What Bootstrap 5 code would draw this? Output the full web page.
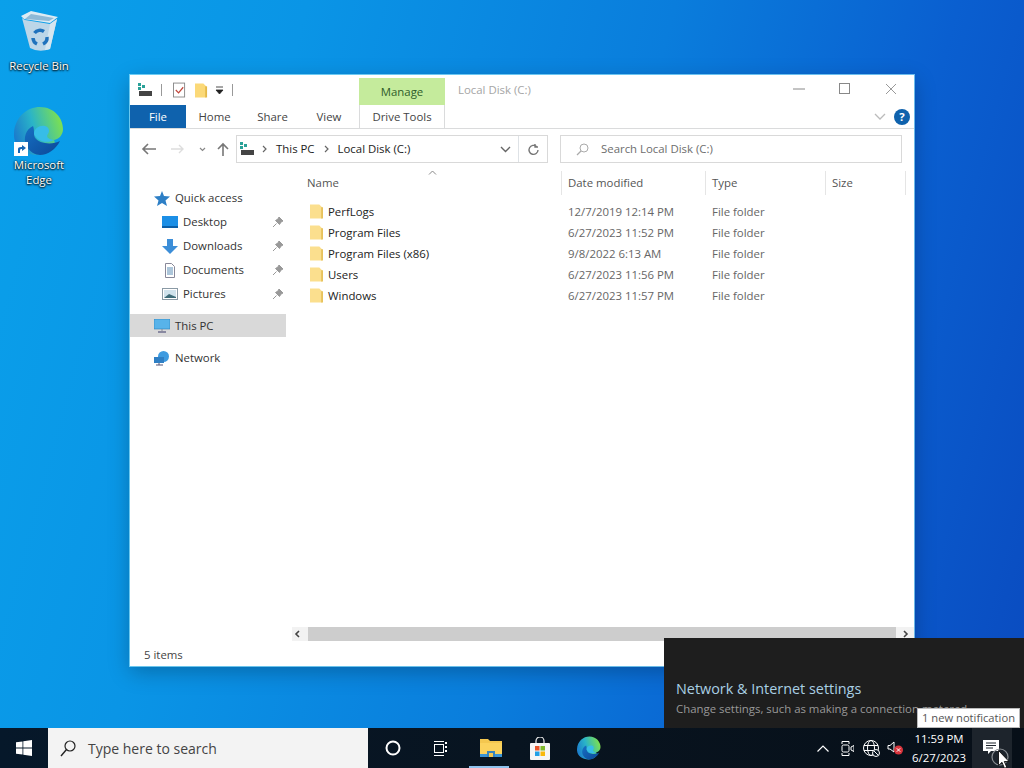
<!DOCTYPE html>
<html>
<head>
    <title>Local Disk (C:)</title>
    <link href="https://cdn.jsdelivr.net/npm/bootstrap@5.3.2/dist/css/bootstrap.min.css" rel="stylesheet"/>
    <style>
    html, body { height: 100%; overflow: hidden; }
    body { font-family: "Open Sans", "Noto Sans", sans-serif; font-size: 11.4px; color: #333; background: #0a86de; }
    .desk { position: relative; width: 1024px; height: 768px; overflow: hidden;
        background: linear-gradient(105deg, #0aa0ea 0%, #0a95e6 25%, #0a7ddc 55%, #0a5fd0 78%, #0a4abf 100%); }
    .desk-ico { position: absolute; width: 76px; color: #fff; text-align: center; line-height: 15px; text-shadow: 0 1px 2px #000, 0 0 2px #000; }
    .ico-bin { left: 1px; top: 11px; }
    .ico-edge { left: 1px; top: 106px; }
    .bin-svg { margin-bottom: 7px; }
    .edge-wrap { position: relative; width: 50px; height: 50px; margin: 0 auto 1px; }
    .edge-short { position: absolute; left: 0; bottom: 0; }

    .win { position: absolute; left: 130px; top: 75px; width: 784px; height: 591px; background: #fff; box-shadow: 0 0 0 1px rgba(150,230,255,.7), 0 6px 20px rgba(0,0,0,.25); }
    .title-row { height: 30px; }
    .qat { padding-left: 8px; width: 229px; }
    .qat-sep { width: 1px; height: 12px; background: #999; }
    .mx-8 { margin-left: 8px; margin-right: 8px; }
    .ml-3px { margin-left: 3px; }
    .ml-7 { margin-left: 7px; }
    .ml-9 { margin-left: 9px; }
    .ml-10 { margin-left: 10px; }
    .ml-11 { margin-left: 11px; }
    .ml-14 { margin-left: 14px; }
    .ml-15 { margin-left: 15px; }
    .ml-12 { margin-left: 12px; }
    .manage-tab { width: 86px; height: 27px; margin-top: 3px; background: #c5eb9c; color: #2f5d2a; text-align: center; line-height: 28px; }
    .title-text { color: #a5a5a5; margin-left: 13px; padding-top: 6px; }
    .win-btns { margin-left: auto; }
    .win-btn { width: 46px; height: 28px; display: flex; align-items: center; justify-content: center; }
    .tabs-row { height: 24px; border-bottom: 1px solid #dadbdc; }
    .tab-file { width: 56px; height: 23px; background: #0f62ad; color: #fff; text-align: center; line-height: 23px; }
    .tab-item { color: #444; line-height: 24px; text-align: center; }
    .tab-home { width: 57px; }
    .tab-share { width: 59px; }
    .tab-view { width: 54px; }
    .tab-drive { width: 86px; height: 23px; margin-left: 3px; border-left: 1px solid #dadbdc; border-right: 1px solid #dadbdc; }
    .help-ico { width: 16px; height: 16px; line-height: 16px; background: #0f62ad; }
    .addr-row { height: 44px; padding-top: 6px; }
    .addr-nav { width: 106px; height: 28px; }
    .addr-box { width: 312px; height: 28px; border: 1px solid #d9d9d9; color: #222; }
    .refresh-btn { width: 29px; margin-left: 7px; }
    .search-box { width: 342px; height: 28px; border: 1px solid #d9d9d9; margin-left: 12px; color: #6d6d6d; }
    .nav-pane { width: 156px; flex: none; padding-top: 13px; }
    .nav-line { height: 24px; color: #333; }
    .nav-top { padding-left: 24px; gap: 5px; }
    .nav-sub { padding-left: 32px; gap: 5px; }
    .nav-sub svg { flex: none; }
    .pin { margin-left: auto; margin-right: 3px; }
    .nav-sel { background: #d9d9d9; height: 23px; margin-top: 8px; }
    .nav-net { margin-top: 9px; }
    .list-pane { flex: 1; min-width: 0; position: relative; padding-left: 6px; }
    .cols { display: grid; grid-template-columns: 263px 144px 120px 80px; padding-left: 7px; }
    .head-row { height: 24px; line-height: 24px; color: #555; margin-top: -2px; }
    .head-cell { padding-left: 6px; border-right: 1px solid #e5e5e5; height: 24px; }
    .head-name { padding-left: 8px; position: relative; }
    .sort-up { position: absolute; left: 129px; top: -1px; }
    .file-row { height: 21px; line-height: 21px; color: #666; }
    .file-row > div { padding-left: 6px; }
    .file-name { display: flex; align-items: center; gap: 5px; color: #222; }
    .file-row > .file-name { padding-left: 11px; }
    .files { margin-top: 6px; }
    .hscroll { position: absolute; left: 6px; right: 0; bottom: 25px; height: 14px; background: #f2f2f2; }
    .hthumb { position: absolute; left: 16px; right: 18px; top: 0; bottom: 0; background: #cdcdcd; }
    .harrow-l { position: absolute; left: 2px; top: 3px; }
    .harrow-r { position: absolute; right: 5px; top: 3px; }
    .status-row { position: absolute; left: 14px; bottom: 3px; color: #444; }

    .flyout { position: absolute; left: 664px; top: 638px; width: 360px; height: 90px; background: #1e1e1e; padding: 42px 0 0 12px; }
    .fly-title { font-size: 14.4px; color: #a9cfe4; line-height: 18px; }
    .fly-sub { color: #999; line-height: 20px; margin-top: 1px; white-space: nowrap; }
    .tip-note { position: absolute; left: 917px; top: 708px; width: 103px; height: 20px; background: #fff; border: 1px solid #bbb; color: #555; font-size: 11.2px; line-height: 18px; text-align: center; white-space: nowrap; }

    .taskbar { position: absolute; left: 0; right: 0; bottom: 0; height: 40px; background: linear-gradient(90deg, #06182a, #081420 50%, #070f18); color: #fff; }
    .start-btn { width: 48px; }
    .search-bar { width: 320px; height: 40px; background: #f3f3f3; color: #444; font-size: 14px; gap: 12px; padding-left: 12px; }
    .tb-ico { width: 49px; height: 40px; flex: none; position: relative; }
    .tb-active::after { content: ""; position: absolute; left: 3px; right: 6px; bottom: 0; height: 2px; background: #8fc3ee; }
    .tray { margin-left: auto; }
    .tray-up { margin-right: 12px; }
    .tray-meet { margin-right: 9px; }
    .tray-globe { margin-right: 7px; }
    .tray-sound { margin-right: 3px; }
    .clock { width: 66px; padding-top: 1px; text-align: center; line-height: 18.500px; color: #fff; }
    .notif { width: 40px; height: 40px; background: #1d242c; margin-right: 12px; }
    .notif-svg { margin: -2px 0 0 -2px; }
    .busy-ring { position: absolute; left: 991px; top: 748px; }
    .cursor-arrow { position: absolute; left: 998px; top: 750px; }
    </style>
</head>
<body>
<svg width="0" height="0" class="position-absolute">
    <defs>
        <linearGradient id="eg1" x1="0" y1=".7" x2="1" y2=".4"><stop offset="0" stop-color="#1a78cc"/><stop offset=".45" stop-color="#2ab4c8"/><stop offset="1" stop-color="#7de050"/></linearGradient>
        <linearGradient id="eg2" x1="0" y1="0" x2="1" y2="1"><stop offset="0" stop-color="#1670c4"/><stop offset="1" stop-color="#0c4796"/></linearGradient>
        <symbol id="edge-logo" viewBox="0 0 50 50">
            <path d="M0 27 C1 11 13 1 26 1 C40 1 49 12 49 23 C49 29 45 33 40 34 C44 42 34 49 24 49 C10 49 -1 40 0 27 Z" fill="url(#eg1)"/>
            <path d="M19 20 C12 23 9 32 12 39 C15 46 22 49 26 49 C34 49 42 43 46 35 C42 37 36 38 31 37 C25 36 20 33 20 28 C20 25 20 22 19 20 Z" fill="url(#eg2)"/>
            <path d="M20 28 C20 22 26 19 31 20 C35 21 36 25 34 28 C32 30 33 33 40 34 C35 37 24 37 20 28 Z" fill="#37bde8"/>
        </symbol>
        <symbol id="pin-ico" viewBox="0 0 10 10">
            <path d="M6 0l4 4-2 1-1.500 2.500L2.500 3.500 5 2zM3.500 6.500L0 10" fill="#999" stroke="#999"/>
        </symbol>
        <symbol id="folder-ico" viewBox="0 0 14 17">
            <path d="M0 1h10l3 3v12H0z" fill="#fbdf8e"/><path d="M13 4v12" stroke="#e7c25c" stroke-width="2"/>
        </symbol>
        <symbol id="drive-ico" viewBox="0 0 15 14">
            <path d="M0 0h3v3H0zM4 2h3v3H4zM0 4h3v3H0z" fill="#2aa198"/><rect x="1" y="8" width="13" height="5" fill="#444"/>
        </symbol>
    </defs>
</svg>
<div class="desk">

    <div class="desk-ico ico-bin">
        <svg width="37" height="40" viewBox="0 0 37 40" class="d-block mx-auto bin-svg">
            <path d="M0 5 L10 0 L37 6 L29 12 L3 8 Z" fill="#dcebf4"/>
            <path d="M4 8 L10 3 L33 7 L28 10 Z" fill="#8fb9d6"/>
            <path d="M1 7 L4 9 L29 13 L36 8 L29 38 Q18 42 9 37 Z" fill="#bcd6e8"/>
            <path d="M29 13 L36 8 L29 38 Q26 39 24 39 Z" fill="#d5e6f0"/>
            <path d="M13.500 22 A7 7 0 0 1 23 20.500 M26 26 A7 7 0 0 1 22 33 M16 33 A7 7 0 0 1 12 27" fill="none" stroke="#1f72bd" stroke-width="3.500"/>
        </svg>
        <div>Recycle Bin</div>
    </div>

    <div class="desk-ico ico-edge">
        <div class="edge-wrap">
            <svg width="50" height="50"><use href="#edge-logo"/></svg>
            <svg class="edge-short" width="14" height="14" viewBox="0 0 14 14">
                <rect width="14" height="14" fill="#fff"/>
                <path d="M4 11 V7 Q4 5 7 5 H8 V3 L12 6 L8 9 V7 H7 Q6 7 6 9 V11 Z" fill="#1666b5"/>
            </svg>
        </div>
        <div>Microsoft<br/>Edge</div>
    </div>

    <div class="win d-flex flex-column">
        <div class="d-flex title-row">
            <div class="d-flex align-items-center qat">
                <svg width="15" height="14"><use href="#drive-ico"/></svg>
                <div class="qat-sep mx-8"></div>
                <svg class="ml-3px" width="13" height="17" viewBox="0 0 14 17"><rect x=".5" y=".5" width="12" height="15" fill="#fff" stroke="#888"/><path d="M3 8l3 3 5-6" fill="none" stroke="#c0453a" stroke-width="1.3"/></svg>
                <svg class="ml-9" width="13" height="17" viewBox="0 0 14 17"><path d="M0 1h9l3 3v12H0z" fill="#fbd978"/><path d="M12 4v12" stroke="#e4b948" stroke-width="2"/></svg>
                <svg class="ml-7" width="9" height="9" viewBox="0 0 9 9"><path d="M1 1h7M1 4h7L4.500 8z" fill="#222" stroke="#222" stroke-width=".8"/></svg>
                <div class="qat-sep mx-8"></div>
            </div>
            <div class="manage-tab">Manage</div>
            <div class="title-text">Local Disk (C:)</div>
            <div class="d-flex win-btns">
                <div class="win-btn"><svg width="12" height="2"><path d="M0 1h12" stroke="#888"/></svg></div>
                <div class="win-btn"><svg width="12" height="12"><rect x=".5" y=".5" width="10" height="10" fill="none" stroke="#888"/></svg></div>
                <div class="win-btn"><svg width="12" height="12"><path d="M1 1l10 10M11 1L1 11" stroke="#999"/></svg></div>
            </div>
        </div>
        <div class="d-flex tabs-row">
            <div class="tab-file">File</div>
            <div class="tab-item tab-home">Home</div>
            <div class="tab-item tab-share">Share</div>
            <div class="tab-item tab-view">View</div>
            <div class="tab-item tab-drive">Drive Tools</div>
            <div class="ms-auto d-flex align-items-center">
                <svg width="12" height="8" viewBox="0 0 12 8" class="me-2"><path d="M1 1l5 5 5-5" fill="none" stroke="#bbb" stroke-width="1.3"/></svg>
                <div class="rounded-circle text-white text-center fw-bold me-1 help-ico">?</div>
            </div>
        </div>
        <div class="d-flex addr-row">
            <div class="d-flex align-items-center addr-nav">
                <svg class="ml-11" width="16" height="14" viewBox="0 0 16 14"><path d="M15 7H2M7 2L2 7l5 5" fill="none" stroke="#777" stroke-width="1.6"/></svg>
                <svg class="ml-14" width="14" height="12" viewBox="0 0 14 12"><path d="M0 6h12M8 2l4 4-4 4" fill="none" stroke="#ddd" stroke-width="1.4"/></svg>
                <svg class="ml-14" width="7" height="5" viewBox="0 0 7 5"><path d="M1 1l2.500 2.500L6 1" fill="none" stroke="#888" stroke-width="1.2"/></svg>
                <svg class="ml-10" width="14" height="14" viewBox="0 0 14 14"><path d="M7 14V2M2 7l5-5 5 5" fill="none" stroke="#777" stroke-width="1.6"/></svg>
            </div>
            <div class="d-flex align-items-center addr-box">
                <svg class="ml-3px" width="15" height="14"><use href="#drive-ico"/></svg>
                <svg class="ml-7" width="5" height="8" viewBox="0 0 5 8"><path d="M1 1l3 3-3 3" fill="none" stroke="#666" stroke-width="1.2"/></svg>
                <span class="ml-9">This PC</span>
                <svg class="ml-9" width="5" height="8" viewBox="0 0 5 8"><path d="M1 1l3 3-3 3" fill="none" stroke="#666" stroke-width="1.2"/></svg>
                <span class="ml-9">Local Disk (C:)</span>
                <svg width="11" height="7" viewBox="0 0 11 7" class="ms-auto"><path d="M1 1l4.500 4.500L10 1" fill="none" stroke="#666" stroke-width="1.4"/></svg>
                <div class="border-start d-flex align-items-center justify-content-center h-100 refresh-btn">
                    <svg width="12" height="13" viewBox="0 0 12 13"><path d="M9.500 3.500A4.500 4.500 0 1 0 11 7M8 1v3h3" fill="none" stroke="#777" stroke-width="1.4"/></svg>
                </div>
            </div>
            <div class="d-flex align-items-center search-box">
                <svg class="ml-15" width="13" height="13" viewBox="0 0 13 13"><circle cx="8" cy="5" r="4" fill="none" stroke="#aaa"/><path d="M5 8l-4 4" stroke="#aaa" stroke-width="1.2"/></svg>
                <span class="ml-12">Search Local Disk (C:)</span>
            </div>
        </div>
        <div class="d-flex flex-grow-1">
            <div class="nav-pane">
                <div class="d-flex align-items-center nav-line nav-top">
                    <svg width="16" height="15" viewBox="0 0 16 15"><path d="M8 0l2 5 6 .5-4.500 4 1.500 5.500L8 12l-5 3 1.500-5.500L0 5.500 6 5z" fill="#2d7fc6"/></svg>
                    <span>Quick access</span>
                </div>
                <div class="d-flex align-items-center nav-line nav-sub">
                    <svg width="16" height="12" viewBox="0 0 16 12"><rect width="16" height="12" fill="#1c8fe6"/><rect y="10" width="16" height="2" fill="#0b5fa8"/></svg>
                    <span>Desktop</span>
                    <svg class="pin" width="10" height="10"><use href="#pin-ico"/></svg>
                </div>
                <div class="d-flex align-items-center nav-line nav-sub">
                    <svg width="16" height="15" viewBox="0 0 16 15"><path d="M5 0h6v7h5l-8 8-8-8h5z" fill="#3c8ed8"/></svg>
                    <span>Downloads</span>
                    <svg class="pin" width="10" height="10"><use href="#pin-ico"/></svg>
                </div>
                <div class="d-flex align-items-center nav-line nav-sub">
                    <svg width="16" height="15" viewBox="0 0 16 15"><path d="M3.500.500h6l3 3v11h-9z" fill="#fff" stroke="#889"/><path d="M5 5h6M5 7h6M5 9h6M5 11h6" stroke="#5b8db5"/></svg>
                    <span>Documents</span>
                    <svg class="pin" width="10" height="10"><use href="#pin-ico"/></svg>
                </div>
                <div class="d-flex align-items-center nav-line nav-sub">
                    <svg width="16" height="12" viewBox="0 0 16 12"><rect x=".5" y=".5" width="15" height="11" fill="#fff" stroke="#8a9aa5"/><rect x="2" y="2" width="12" height="8" fill="#cfe2ec"/><path d="M2 10l5-4 7 3v1z" fill="#3d6b78"/></svg>
                    <span>Pictures</span>
                    <svg class="pin" width="10" height="10"><use href="#pin-ico"/></svg>
                </div>
                <div class="d-flex align-items-center nav-line nav-top nav-sel">
                    <svg width="16" height="14" viewBox="0 0 16 14"><rect width="16" height="10" fill="#58b3ea" stroke="#2b7fb8" stroke-width=".6"/><path d="M4 13h8" stroke="#668" stroke-width="1.4"/><path d="M8 10v3" stroke="#889"/></svg>
                    <span>This PC</span>
                </div>
                <div class="d-flex align-items-center nav-line nav-top nav-net">
                    <svg width="16" height="15" viewBox="0 0 16 15"><circle cx="9.500" cy="5.500" r="5.500" fill="#3e9be0"/><rect x="0" y="6" width="10" height="6" fill="#2f7fc4"/><path d="M2 14h7M5 12v2" stroke="#557"/></svg>
                    <span>Network</span>
                </div>
            </div>
            <div class="list-pane">
                <div class="cols head-row">
                    <div class="head-cell head-name">Name
                        <svg class="sort-up" width="9" height="5" viewBox="0 0 9 5"><path d="M1 4.500l3.500-3.500L8 4.500" fill="none" stroke="#888"/></svg>
                    </div>
                    <div class="head-cell">Date modified</div>
                    <div class="head-cell">Type</div>
                    <div class="head-cell">Size</div>
                </div>
                <div class="files">
                    <div class="cols file-row"><div class="file-name"><svg width="13" height="17"><use href="#folder-ico"/></svg>PerfLogs</div><div>12/7/2019 12:14 PM</div><div>File folder</div><div></div></div>
                    <div class="cols file-row"><div class="file-name"><svg width="13" height="17"><use href="#folder-ico"/></svg>Program Files</div><div>6/27/2023 11:52 PM</div><div>File folder</div><div></div></div>
                    <div class="cols file-row"><div class="file-name"><svg width="13" height="17"><use href="#folder-ico"/></svg>Program Files (x86)</div><div>9/8/2022 6:13 AM</div><div>File folder</div><div></div></div>
                    <div class="cols file-row"><div class="file-name"><svg width="13" height="17"><use href="#folder-ico"/></svg>Users</div><div>6/27/2023 11:56 PM</div><div>File folder</div><div></div></div>
                    <div class="cols file-row"><div class="file-name"><svg width="13" height="17"><use href="#folder-ico"/></svg>Windows</div><div>6/27/2023 11:57 PM</div><div>File folder</div><div></div></div>
                </div>
                <div class="hscroll">
                    <svg class="harrow-l" width="6" height="8" viewBox="0 0 6 8"><path d="M5 1L2 4l3 3" fill="none" stroke="#444" stroke-width="1.6"/></svg>
                    <div class="hthumb"></div>
                    <svg class="harrow-r" width="6" height="8" viewBox="0 0 6 8"><path d="M1 1l3 3-3 3" fill="none" stroke="#444" stroke-width="1.6"/></svg>
                </div>
            </div>
        </div>
        <div class="status-row">5 items</div>
    </div>

    <div class="flyout">
        <div class="fly-title">Network &amp; Internet settings</div>
        <div class="fly-sub">Change settings, such as making a connection metered.</div>
    </div>
    <div class="tip-note">1 new notification</div>

    <div class="taskbar d-flex align-items-center">
        <div class="start-btn d-flex justify-content-center">
            <svg width="16" height="16" viewBox="0 0 16 16"><path d="M0 2.300l6.500-.9v6.200H0zM7.300 1.300L16 0v7.600H7.300zM0 8.400h6.500v6.200L0 13.700zM7.300 8.400H16V16l-8.700-1.300z" fill="#fff"/></svg>
        </div>
        <div class="search-bar d-flex align-items-center">
            <svg width="16" height="17" viewBox="0 0 16 17"><circle cx="10" cy="6" r="5" fill="none" stroke="#222" stroke-width="1.2"/><path d="M6.500 9.500L1 16" stroke="#222" stroke-width="1.4"/></svg>
            <span>Type here to search</span>
        </div>
        <div class="tb-ico d-flex align-items-center justify-content-center">
            <svg width="16" height="16"><circle cx="8" cy="8" r="6.500" fill="none" stroke="#fff" stroke-width="2"/></svg>
        </div>
        <div class="tb-ico d-flex align-items-center justify-content-center">
            <svg width="16" height="15" viewBox="0 0 16 15"><path d="M0 .5h10M0 14.500h10" stroke="#fff"/><rect x=".5" y="3.500" width="9" height="8" fill="none" stroke="#fff"/><path d="M12 1v2M12 5v2M12 9v2" stroke="#fff" stroke-width="2"/></svg>
        </div>
        <div class="tb-ico tb-active d-flex align-items-center justify-content-center">
            <svg width="22" height="20" viewBox="0 0 22 20"><path d="M0 1h8l2 2h12v16H0z" fill="#f4c74f"/><rect x="0" y="5" width="22" height="14" fill="#fbd25d"/><rect y="16" width="22" height="3" fill="#3b94d4"/><path d="M7 19v-6h8v6z" fill="#3583bf"/><rect x="9" y="15" width="4" height="4" fill="#f4c74f"/></svg>
        </div>
        <div class="tb-ico d-flex align-items-center justify-content-center">
            <svg width="20" height="23" viewBox="0 0 20 23"><path d="M6 6V4a4 4 0 0 1 8 0v2" fill="none" stroke="#eee" stroke-width="1.2"/><rect y="6" width="20" height="17" rx="1" fill="#f5f5f5"/><rect x="5" y="9" width="4.500" height="4.500" fill="#e8542a"/><rect x="10.500" y="9" width="4.500" height="4.500" fill="#7fb82c"/><rect x="5" y="14.500" width="4.500" height="4.500" fill="#22a0e6"/><rect x="10.500" y="14.500" width="4.500" height="4.500" fill="#f9b90c"/></svg>
        </div>
        <div class="tb-ico d-flex align-items-center justify-content-center">
            <svg width="24" height="24"><use href="#edge-logo"/></svg>
        </div>
        <div class="tray d-flex align-items-center">
            <svg class="tray-up" width="12" height="7" viewBox="0 0 12 7"><path d="M.5 6.500L6 1l5.500 5.500" fill="none" stroke="#fff" stroke-width="1.2"/></svg>
            <svg class="tray-meet" width="13" height="17" viewBox="0 0 13 17"><path d="M1 4V1.500h7V4M1 13v2.500h7V13" fill="none" stroke="#fff"/><rect x="1" y="5" width="7" height="7" rx="1.500" fill="none" stroke="#fff"/><path d="M10 7l3-1.500v6L10 10z" fill="none" stroke="#fff"/></svg>
            <svg class="tray-globe" width="17" height="17" viewBox="0 0 17 17"><circle cx="8" cy="8" r="7.500" fill="none" stroke="#fff"/><ellipse cx="8" cy="8" rx="3.500" ry="7.500" fill="none" stroke="#fff"/><path d="M1 5.500h14M1 10.500h14" stroke="#fff"/><circle cx="13" cy="13" r="3.500" fill="#081420" stroke="#fff"/><path d="M11 11l4 4" stroke="#fff"/></svg>
            <svg class="tray-sound" width="16" height="14" viewBox="0 0 16 14"><path d="M1 4.500h2L7 1v10L3 8H1z" fill="none" stroke="#fff"/><circle cx="11.500" cy="9" r="4.500" fill="#d8343c"/><path d="M9.800 7.300l3.400 3.400M13.200 7.300l-3.400 3.400" stroke="#fff"/></svg>
            <div class="clock">11:59 PM<br/>6/27/2023</div>
            <div class="notif d-flex align-items-center justify-content-center">
                <svg class="notif-svg" width="16" height="14" viewBox="0 0 16 14"><path d="M0 0h16v11H8l-3 3v-3H0z" fill="#fff"/><path d="M3 3h10M3 5.500h10M3 8h7" stroke="#1d242c"/></svg>
            </div>
        </div>
    </div>

    <svg class="busy-ring" width="18" height="18"><circle cx="9" cy="9" r="8" fill="none" stroke="#8a8f94" stroke-width="1.2"/></svg>
    <svg class="cursor-arrow" width="12" height="19" viewBox="0 0 12 19"><path d="M.5.500v15l3.500-3.200 2.500 6 2.300-1-2.500-5.800H11z" fill="#fff" stroke="#000" stroke-width=".8"/></svg>
</div>
<script src="https://cdn.jsdelivr.net/npm/bootstrap@5.3.2/dist/js/bootstrap.bundle.min.js"></script>
</body>
</html>
